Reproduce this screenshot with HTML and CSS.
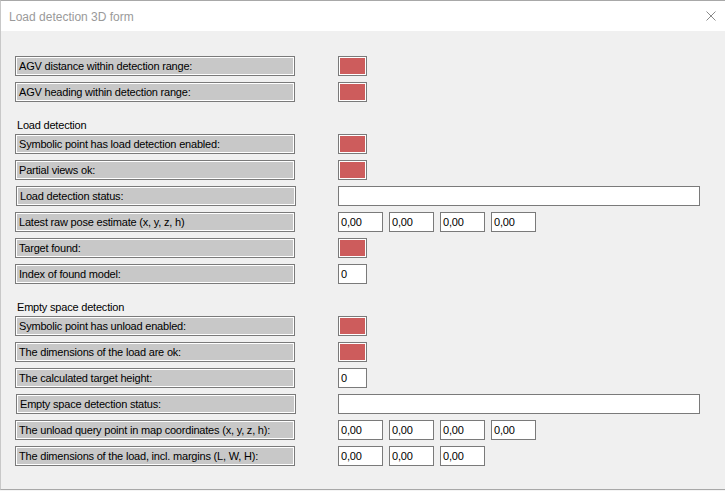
FILE: index.html
```html
<!DOCTYPE html>
<html>
<head>
<meta charset="utf-8">
<link rel="stylesheet" href="styles.css">
</head>
<body>
<div class="window">
  <div class="titlebar">
    <span class="title">Load detection 3D form</span>
    <svg class="close" width="10" height="10" viewBox="0 0 10 10"><path d="M0.5 0.5 L9.5 9.5 M9.5 0.5 L0.5 9.5" stroke="#8a8a8a" stroke-width="1" fill="none"/></svg>
  </div>
  <div class="content">
    <div class="row"><div class="label">AGV distance within detection range:</div><div class="values"><div class="led"></div></div></div>
    <div class="row"><div class="label">AGV heading within detection range:</div><div class="values"><div class="led"></div></div></div>

    <div class="heading">Load detection</div>
    <div class="row"><div class="label">Symbolic point has load detection enabled:</div><div class="values"><div class="led"></div></div></div>
    <div class="row"><div class="label">Partial views ok:</div><div class="values"><div class="led"></div></div></div>
    <div class="row"><div class="label shift">Load detection status:</div><div class="values"><div class="box wide"></div></div></div>
    <div class="row"><div class="label">Latest raw pose estimate (x, y, z, h)</div><div class="values"><div class="box num">0,00</div><div class="box num">0,00</div><div class="box num">0,00</div><div class="box num">0,00</div></div></div>
    <div class="row"><div class="label">Target found:</div><div class="values"><div class="led"></div></div></div>
    <div class="row"><div class="label">Index of found model:</div><div class="values"><div class="box small">0</div></div></div>

    <div class="heading">Empty space detection</div>
    <div class="row"><div class="label">Symbolic point has unload enabled:</div><div class="values"><div class="led"></div></div></div>
    <div class="row"><div class="label">The dimensions of the load are ok:</div><div class="values"><div class="led"></div></div></div>
    <div class="row"><div class="label">The calculated target height:</div><div class="values"><div class="box small">0</div></div></div>
    <div class="row"><div class="label shift">Empty space detection status:</div><div class="values"><div class="box wide"></div></div></div>
    <div class="row"><div class="label">The unload query point in map coordinates (x, y, z, h):</div><div class="values"><div class="box num">0,00</div><div class="box num">0,00</div><div class="box num">0,00</div><div class="box num">0,00</div></div></div>
    <div class="row"><div class="label">The dimensions of the load, incl. margins (L, W, H):</div><div class="values"><div class="box num">0,00</div><div class="box num">0,00</div><div class="box num">0,00</div></div></div>
  </div>
</div>
</body>
</html>
```

FILE: styles.css
```css
html, body {
  margin: 0;
  padding: 0;
  background: #f4f4f4;
}
.window {
  box-sizing: border-box;
  width: 725px;
  height: 490px;
  border-top: 1px solid #a8a8a8;
  border-left: 1px solid #c8c8c8;
  border-bottom: 1px solid #a8a8a8;
  background: #f0f0f0;
  font-family: "Liberation Sans", Arial, sans-serif;
  font-size: 11px;
  letter-spacing: -0.2px;
  color: #000;
}
.titlebar {
  height: 30px;
  background: #fff;
  display: flex;
  align-items: center;
  justify-content: space-between;
  padding: 0 9px 0 8px;
}
.title {
  font-family: "Liberation Sans", Arial, sans-serif;
  font-size: 12px;
  letter-spacing: 0;
  color: #9a9a9a;
  padding-top: 1px;
}
.close {
  display: block;
}
.content {
  padding: 25px 0 0 14px;
}
.row {
  display: flex;
  height: 20px;
  margin-bottom: 6px;
}
.heading {
  height: 13px;
  line-height: 13px;
  margin-top: 17px;
  margin-bottom: 2px;
  padding-left: 2px;
}
.label {
  box-sizing: border-box;
  width: 280px;
  height: 20px;
  margin-right: 43px;
  border: 1px solid #7a7a7a;
  box-shadow: inset 0 0 0 1px #fff;
  background: #c8c8c8;
  display: flex;
  align-items: center;
  padding-left: 3px;
  white-space: nowrap;
}
.label.shift {
  margin-left: 1px;
  margin-right: 42px;
}
.values {
  display: flex;
  gap: 6px;
}
.led {
  box-sizing: border-box;
  width: 29px;
  height: 20px;
  border: 1px solid #7a7a7a;
  box-shadow: inset 0 0 0 1px #fff;
  background: #cd5c5c;
}
.box {
  box-sizing: border-box;
  height: 20px;
  border: 1px solid #7a7a7a;
  background: #fff;
  display: flex;
  align-items: center;
  padding-left: 2px;
}
.box.num { width: 45px; }
.box.small { width: 29px; }
.box.wide { width: 362px; }
```
